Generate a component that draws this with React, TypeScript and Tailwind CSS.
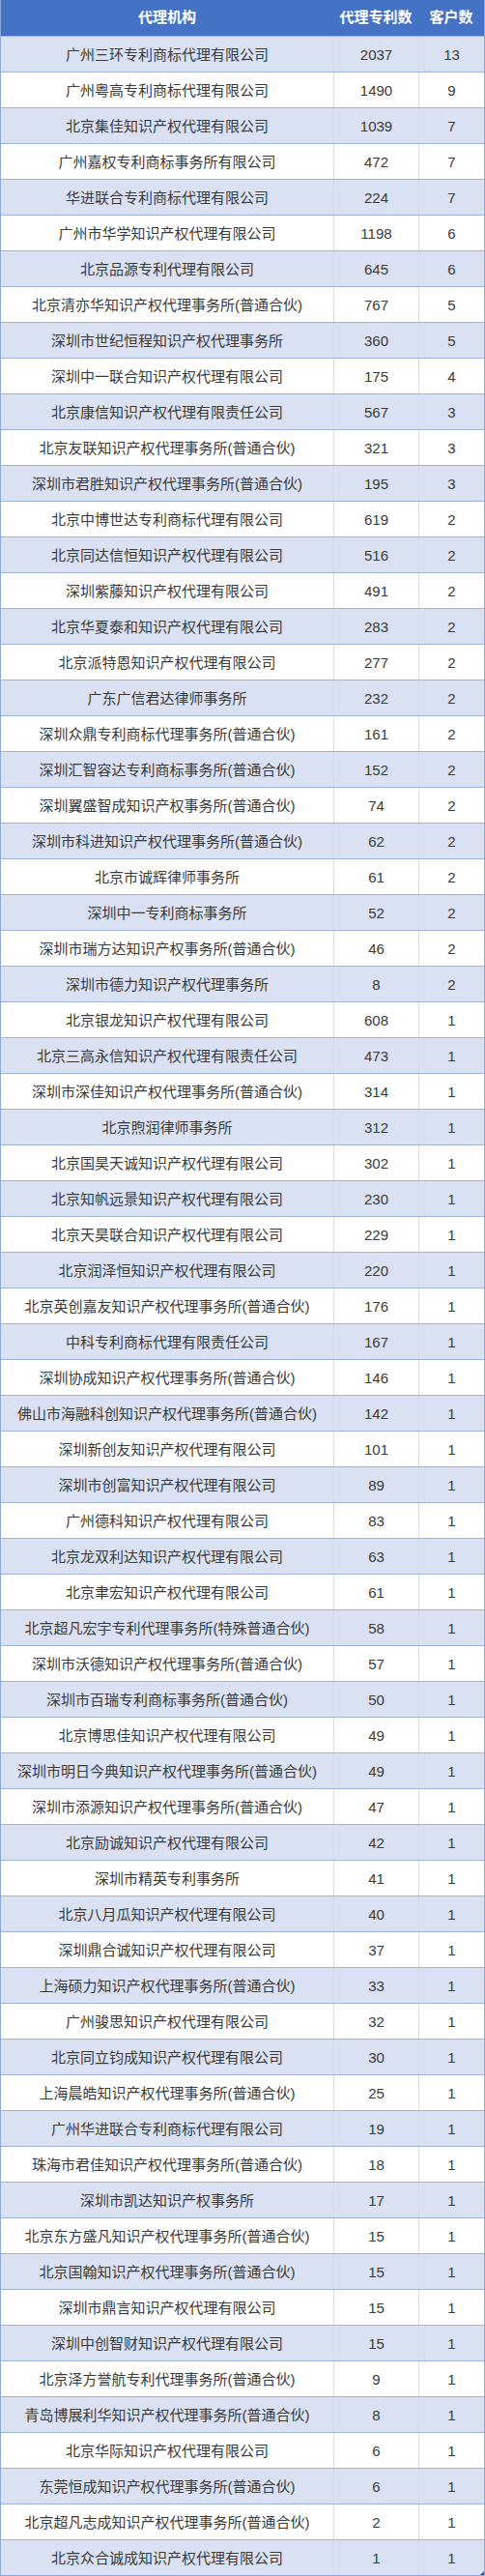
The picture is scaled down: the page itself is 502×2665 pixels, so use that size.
import React from 'react';

const rows: [string, number, number][] = [
  ['广州三环专利商标代理有限公司', 2037, 13],
  ['广州粤高专利商标代理有限公司', 1490, 9],
  ['北京集佳知识产权代理有限公司', 1039, 7],
  ['广州嘉权专利商标事务所有限公司', 472, 7],
  ['华进联合专利商标代理有限公司', 224, 7],
  ['广州市华学知识产权代理有限公司', 1198, 6],
  ['北京品源专利代理有限公司', 645, 6],
  ['北京清亦华知识产权代理事务所(普通合伙)', 767, 5],
  ['深圳市世纪恒程知识产权代理事务所', 360, 5],
  ['深圳中一联合知识产权代理有限公司', 175, 4],
  ['北京康信知识产权代理有限责任公司', 567, 3],
  ['北京友联知识产权代理事务所(普通合伙)', 321, 3],
  ['深圳市君胜知识产权代理事务所(普通合伙)', 195, 3],
  ['北京中博世达专利商标代理有限公司', 619, 2],
  ['北京同达信恒知识产权代理有限公司', 516, 2],
  ['深圳紫藤知识产权代理有限公司', 491, 2],
  ['北京华夏泰和知识产权代理有限公司', 283, 2],
  ['北京派特恩知识产权代理有限公司', 277, 2],
  ['广东广信君达律师事务所', 232, 2],
  ['深圳众鼎专利商标代理事务所(普通合伙)', 161, 2],
  ['深圳汇智容达专利商标事务所(普通合伙)', 152, 2],
  ['深圳翼盛智成知识产权事务所(普通合伙)', 74, 2],
  ['深圳市科进知识产权代理事务所(普通合伙)', 62, 2],
  ['北京市诚辉律师事务所', 61, 2],
  ['深圳中一专利商标事务所', 52, 2],
  ['深圳市瑞方达知识产权事务所(普通合伙)', 46, 2],
  ['深圳市德力知识产权代理事务所', 8, 2],
  ['北京银龙知识产权代理有限公司', 608, 1],
  ['北京三高永信知识产权代理有限责任公司', 473, 1],
  ['深圳市深佳知识产权代理事务所(普通合伙)', 314, 1],
  ['北京煦润律师事务所', 312, 1],
  ['北京国昊天诚知识产权代理有限公司', 302, 1],
  ['北京知帆远景知识产权代理有限公司', 230, 1],
  ['北京天昊联合知识产权代理有限公司', 229, 1],
  ['北京润泽恒知识产权代理有限公司', 220, 1],
  ['北京英创嘉友知识产权代理事务所(普通合伙)', 176, 1],
  ['中科专利商标代理有限责任公司', 167, 1],
  ['深圳协成知识产权代理事务所(普通合伙)', 146, 1],
  ['佛山市海融科创知识产权代理事务所(普通合伙)', 142, 1],
  ['深圳新创友知识产权代理有限公司', 101, 1],
  ['深圳市创富知识产权代理有限公司', 89, 1],
  ['广州德科知识产权代理有限公司', 83, 1],
  ['北京龙双利达知识产权代理有限公司', 63, 1],
  ['北京聿宏知识产权代理有限公司', 61, 1],
  ['北京超凡宏宇专利代理事务所(特殊普通合伙)', 58, 1],
  ['深圳市沃德知识产权代理事务所(普通合伙)', 57, 1],
  ['深圳市百瑞专利商标事务所(普通合伙)', 50, 1],
  ['北京博思佳知识产权代理有限公司', 49, 1],
  ['深圳市明日今典知识产权代理事务所(普通合伙)', 49, 1],
  ['深圳市添源知识产权代理事务所(普通合伙)', 47, 1],
  ['北京励诚知识产权代理有限公司', 42, 1],
  ['深圳市精英专利事务所', 41, 1],
  ['北京八月瓜知识产权代理有限公司', 40, 1],
  ['深圳鼎合诚知识产权代理有限公司', 37, 1],
  ['上海硕力知识产权代理事务所(普通合伙)', 33, 1],
  ['广州骏思知识产权代理有限公司', 32, 1],
  ['北京同立钧成知识产权代理有限公司', 30, 1],
  ['上海晨皓知识产权代理事务所(普通合伙)', 25, 1],
  ['广州华进联合专利商标代理有限公司', 19, 1],
  ['珠海市君佳知识产权代理事务所(普通合伙)', 18, 1],
  ['深圳市凯达知识产权事务所', 17, 1],
  ['北京东方盛凡知识产权代理事务所(普通合伙)', 15, 1],
  ['北京国翰知识产权代理事务所(普通合伙)', 15, 1],
  ['深圳市鼎言知识产权代理有限公司', 15, 1],
  ['深圳中创智财知识产权代理有限公司', 15, 1],
  ['北京泽方誉航专利代理事务所(普通合伙)', 9, 1],
  ['青岛博展利华知识产权代理事务所(普通合伙)', 8, 1],
  ['北京华际知识产权代理有限公司', 6, 1],
  ['东莞恒成知识产权代理事务所(普通合伙)', 6, 1],
  ['北京超凡志成知识产权代理事务所(普通合伙)', 2, 1],
  ['北京众合诚成知识产权代理有限公司', 1, 1],
];

const App = () => {
  return (
    <div className="w-[502px] bg-white font-['Liberation_Sans','Noto_Sans_CJK_SC',sans-serif] text-[15px] text-[#3a3a3a]">
      <div className="relative border-x border-b border-[#8eaadb]">
        {/* Header */}
        <div className="grid h-[37px] grid-cols-[344px_88px_1fr] items-center bg-[#4472c4] font-bold text-white">
          <div className="text-center">代理机构</div>
          <div className="text-center">代理专利数</div>
          <div className="text-center">客户数</div>
        </div>

        {/* Rows */}
        {rows.map(([name, patents, clients], i) => (
          <div
            key={name}
            className={`grid h-[37px] grid-cols-[344px_88px_1fr] border-t border-[#9fb4dc] ${
              i % 2 === 0 ? 'bg-[#d9e1f2]' : 'bg-white'
            }`}
          >
            <div className="flex items-center justify-center whitespace-nowrap pt-[2px]">{name}</div>
            <div className="flex items-center justify-center border-l border-[#d6dce8] pt-[2px]">{patents}</div>
            <div className="flex items-center justify-center border-l border-[#d6dce8] pt-[2px]">{clients}</div>
          </div>
        ))}

        {/* resize handle */}
        <div className="absolute bottom-0 right-0 h-0 w-0 border-b-[4px] border-l-[4px] border-b-[#2f4f8f] border-l-transparent" />
      </div>
    </div>
  );
};

export default App;
